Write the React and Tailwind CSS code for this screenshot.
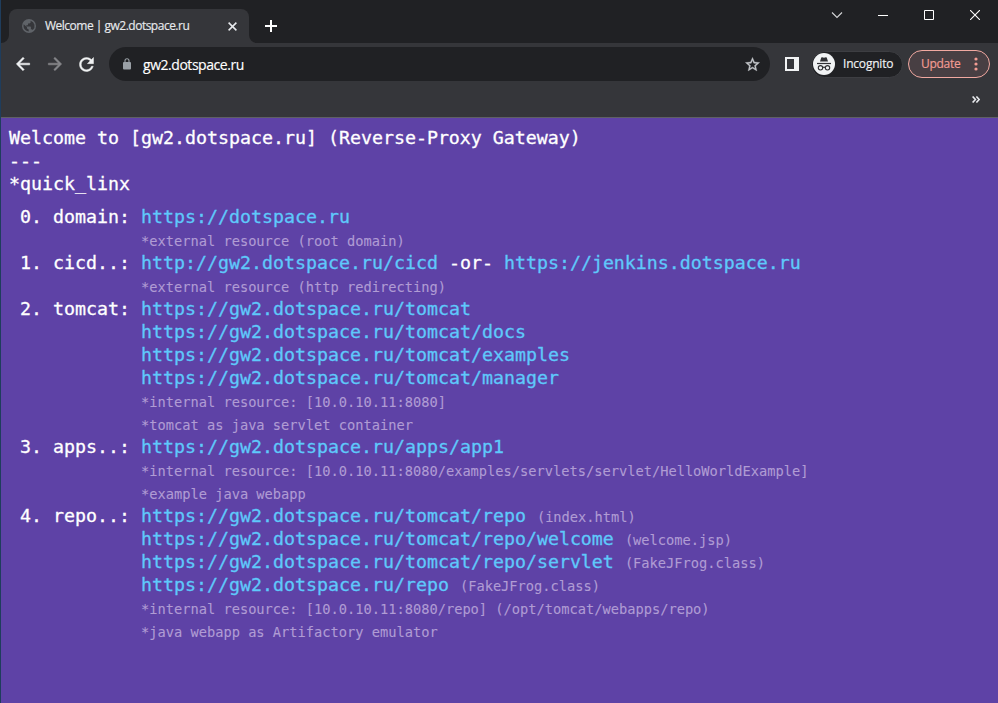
import React from "react";

const NOTE = "text-[13.7px] text-[#b09cd4] [-webkit-text-stroke:0.1px]";
const LINK = "text-[#5ec9fb]";

const T = ({ children }) => <span>{children}</span>;
const A = ({ children }) => <a className={LINK}>{children}</a>;
const N = ({ children }) => <span className={NOTE}>{children}</span>;
const Row = ({ label = "", children }) => (
  <div className="flex h-[23px]">
    <span className="w-[132px] shrink-0">{label}</span>
    <span>{children}</span>
  </div>
);

function TabStrip() {
  return (
    <div className="flex h-[43px] justify-between bg-[#202124]">
      <div className="flex items-end">
        <svg width="8" height="8" viewBox="0 0 8 8" fill="#35363a">
          <path d="M0 8A8 8 0 0 0 8 0V8Z" />
        </svg>
        <div className="flex h-[34px] w-[240px] items-center rounded-t-lg bg-[#35363a] pl-[13px] pr-[12px]">
          <svg width="14" height="14" viewBox="0 0 14 14">
            <circle cx="7" cy="7" r="7" fill="#5f6368" />
            <path
              d="M1.7 5.2 5 8.3v1.1l1.7 1.2v1.8C3.500 12 1.500 9.800 1.500 7ZM8.600 1.800v1.400c0 .7-.6 1.200-1.300 1.200H6v1.300c0 .4-.3.600-.6.600H4.300v1.300h3.900c.4 0 .7.300.7.700v1.900h.6c.6 0 1 .4 1.200.9A5.400 5.400 0 0 0 8.600 1.800Z"
              fill="#35363a"
            />
          </svg>
          <span className="ml-[9px] whitespace-pre text-[12px] tracking-[-0.5px] text-[#e8eaed] [-webkit-text-stroke:0.15px]">
            Welcome | gw2.dotspace.ru
          </span>
          <svg className="ml-auto" width="9" height="9" viewBox="0 0 9 9" stroke="#e8eaed" strokeWidth="1.5">
            <path d="M.6.6 8.400 8.400M8.400.6.6 8.400" />
          </svg>
        </div>
        <svg width="8" height="8" viewBox="0 0 8 8" fill="#35363a">
          <path d="M8 8A8 8 0 0 1 0 0V8Z" />
        </svg>
        <svg className="mb-[11px] ml-[8px]" width="12" height="12" viewBox="0 0 12 12" stroke="#fff" strokeWidth="2">
          <path d="M6 0V12M0 6H12" />
        </svg>
      </div>
      <div className="flex h-[30px] *:w-[46px]">
        <div className="flex items-center justify-center">
          <svg width="12" height="8" viewBox="0 0 12 8" fill="none" stroke="#d5d6d8" strokeWidth="1.1">
            <path d="m1 1.500 5 5 5-5" />
          </svg>
        </div>
        <div className="flex items-center justify-center">
          <svg width="10" height="11" viewBox="0 0 10 11">
            <path d="M0 5.500H10" stroke="#fff" />
          </svg>
        </div>
        <div className="flex items-center justify-center">
          <svg width="10" height="10" viewBox="0 0 10 10" fill="none" stroke="#fff">
            <path d="M.5.5h9v9h-9Z" />
          </svg>
        </div>
        <div className="flex items-center justify-center">
          <svg width="10" height="10" viewBox="0 0 10 10" stroke="#fff" strokeWidth="1.1">
            <path d="m0 0 10 10M10 0 0 10" />
          </svg>
        </div>
      </div>
    </div>
  );
}

function Toolbar() {
  return (
    <div className="h-[75px] border-b border-[#5f6064] bg-[#35363a]">
      <div className="flex h-[42px] items-center pl-[12px] pr-[8px]">
        <svg width="20" height="20" viewBox="0 0 24 24" fill="#f1f3f4" stroke="#f1f3f4" strokeWidth=".6">
          <path d="M20 11H7.830l5.590-5.590L12 4l-8 8 8 8 1.410-1.410L7.830 13H20z" />
        </svg>
        <svg className="ml-[12px]" width="20" height="20" viewBox="0 0 24 24" fill="#86878a" stroke="#86878a" strokeWidth=".6">
          <path d="m12 4-1.410 1.410L16.170 11H4v2h12.170l-5.580 5.590L12 20l8-8z" />
        </svg>
        <svg className="ml-[11px]" width="21" height="21" viewBox="0 0 24 24" fill="#f1f3f4" stroke="#f1f3f4" strokeWidth=".5">
          <path d="M17.650 6.350C16.200 4.900 14.210 4 12 4c-4.420 0-7.990 3.580-7.990 8s3.570 8 7.990 8c3.730 0 6.840-2.550 7.730-6h-2.080c-.82 2.330-3.040 4-5.650 4-3.310 0-6-2.690-6-6s2.690-6 6-6c1.660 0 3.140.69 4.220 1.780L13 11h7V4z" />
        </svg>
        <div className="ml-[12px] flex h-[34px] w-[661px] items-center rounded-full bg-[#202124] pl-[14px] pr-[9px]">
          <svg width="8" height="12" viewBox="0 0 8 12">
            <rect x="0" y="4" width="8" height="7.500" rx="1" fill="#9aa0a6" />
            <path d="M2 4.500V2.800a2 2 0 0 1 4 0v1.700" fill="none" stroke="#9aa0a6" strokeWidth="1.1" />
          </svg>
          <span className="ml-[12px] text-[14px] tracking-[-0.46px] text-white [-webkit-text-stroke:0.15px]">gw2.dotspace.ru</span>
          <svg className="ml-auto" width="17" height="17" viewBox="0 0 24 24" fill="#c4c7ca" stroke="#c4c7ca" strokeWidth=".5">
            <path d="m22 9.240-7.190-.62L12 2 9.190 8.630 2 9.240l5.460 4.730L5.820 21 12 17.270 18.180 21l-1.630-7.030zM12 15.400l-3.760 2.270 1-4.280-3.320-2.880 4.380-.38L12 6.100l1.710 4.040 4.380.38-3.320 2.880 1 4.280z" />
          </svg>
        </div>
        <svg className="ml-[15px]" width="14" height="14" viewBox="0 0 14 14" fill="#f1f3f4" fillRule="evenodd">
          <path d="M0 0H14V14H0ZM2 2V12H9V2Z" />
        </svg>
        <div className="ml-[12px] flex h-[27px] w-[92px] items-center rounded-full border border-[#3d3e42] bg-[#202124] pl-px">
          <svg width="22" height="22" viewBox="0 0 22 22">
            <circle cx="11" cy="11" r="11" fill="#f1f3f4" />
            <path d="M7 8.500 8.200 4.700c.1-.4.500-.6.900-.4l1.900.4 1.900-.4c.4-.2.8 0 .9.400L15 8.500Z" fill="#303134" />
            <path d="M4 10.500H18" stroke="#303134" strokeWidth="1.200" />
            <g fill="none" stroke="#303134" strokeWidth="1.100">
              <circle cx="7.500" cy="14.800" r="2.200" />
              <circle cx="14.500" cy="14.800" r="2.200" />
              <path d="M9.700 14.600q1.300-.9 2.600 0" />
            </g>
          </svg>
          <span className="ml-[8px] text-[12px] tracking-[-0.2px] text-[#f1f3f4] [-webkit-text-stroke:0.15px]">Incognito</span>
        </div>
        <div className="ml-[5px] flex h-[28px] w-[82px] items-center rounded-full border border-[#f2a9a1] bg-[#483f43] pl-[12px]">
          <span className="text-[12px] tracking-[-0.3px] text-[#f39c93] [-webkit-text-stroke:0.15px]">Update</span>
          <svg className="ml-auto mr-[11px]" width="4" height="14" viewBox="0 0 4 14" fill="#f39c93">
            <circle cx="2" cy="2" r="1.600" />
            <circle cx="2" cy="7" r="1.600" />
            <circle cx="2" cy="12" r="1.600" />
          </svg>
        </div>
      </div>
      <div className="flex h-[32px] items-center justify-end pr-[18px]">
        <svg className="-mt-[4px]" width="8" height="7" viewBox="0 0 8 7" fill="none" stroke="#e8eaed" strokeWidth="1.600">
          <path d="m.6.500 2.800 3-2.800 3M4.400.500l2.800 3-2.800 3" />
        </svg>
      </div>
    </div>
  );
}

export default function App() {
  return (
    <div className="flex h-[703px] w-[998px] flex-col overflow-hidden border-l border-[#1f3d5c] bg-[#5e42a6] font-['Open_Sans',sans-serif]">
      <TabStrip />
      <Toolbar />
      <main className="grow whitespace-pre pl-[8px] pt-[8px] font-['DejaVu_Sans_Mono',monospace] text-[18.27px] leading-[23px] text-white [-webkit-text-stroke:0.3px]">
        <div>Welcome to [gw2.dotspace.ru] (Reverse-Proxy Gateway)</div>
        <div>---</div>
        <div className="mb-[10px]">*quick_linx</div>
        <Row label=" 0. domain:"><A>https://dotspace.ru</A></Row>
        <Row><N>*external resource (root domain)</N></Row>
        <Row label=" 1. cicd..:">
          <A>http://gw2.dotspace.ru/cicd</A><T>{" -or- "}</T><A>https://jenkins.dotspace.ru</A>
        </Row>
        <Row><N>*external resource (http redirecting)</N></Row>
        <Row label=" 2. tomcat:"><A>https://gw2.dotspace.ru/tomcat</A></Row>
        <Row><A>https://gw2.dotspace.ru/tomcat/docs</A></Row>
        <Row><A>https://gw2.dotspace.ru/tomcat/examples</A></Row>
        <Row><A>https://gw2.dotspace.ru/tomcat/manager</A></Row>
        <Row><N>*internal resource: [10.0.10.11:8080]</N></Row>
        <Row><N>*tomcat as java servlet container</N></Row>
        <Row label=" 3. apps..:"><A>https://gw2.dotspace.ru/apps/app1</A></Row>
        <Row><N>*internal resource: [10.0.10.11:8080/examples/servlets/servlet/HelloWorldExample]</N></Row>
        <Row><N>*example java webapp</N></Row>
        <Row label=" 4. repo..:"><A>https://gw2.dotspace.ru/tomcat/repo</A> <N>(index.html)</N></Row>
        <Row><A>https://gw2.dotspace.ru/tomcat/repo/welcome</A> <N>(welcome.jsp)</N></Row>
        <Row><A>https://gw2.dotspace.ru/tomcat/repo/servlet</A> <N>(FakeJFrog.class)</N></Row>
        <Row><A>https://gw2.dotspace.ru/repo</A> <N>(FakeJFrog.class)</N></Row>
        <Row><N>*internal resource: [10.0.10.11:8080/repo] (/opt/tomcat/webapps/repo)</N></Row>
        <Row><N>*java webapp as Artifactory emulator</N></Row>
      </main>
    </div>
  );
}
